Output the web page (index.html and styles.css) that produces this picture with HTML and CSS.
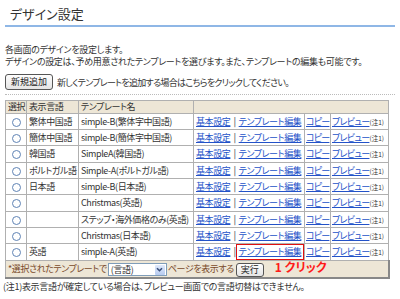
FILE: index.html
```html
<!DOCTYPE html>
<html>
<head>
    <title>デザイン設定</title>
    <meta charset="utf-8">
    <link rel="stylesheet" href="styles.css">
</head>
<body>
    <h1 class="title">デザイン設定</h1>
    <p class="desc">各画面のデザインを設定します。<br>デザインの設定は、予め用意されたテンプレートを選びます。また、テンプレートの編集も可能です。</p>
    <div class="add-row">
        <button class="btn">新規追加</button>
        <span class="add-text">新しくテンプレートを追加する場合はこちらをクリックしてください。</span>
    </div>
    <table class="design">
        <colgroup>
            <col class="c-sel"><col class="c-lang"><col class="c-name"><col class="c-edit"><col class="c-copy"><col class="c-prev">
        </colgroup>
        <thead>
            <tr><th>選択</th><th>表示言語</th><th>テンプレート名</th><th colspan="3"></th></tr>
        </thead>
        <tbody id="rows">
            <!-- テンプレート一覧 -->
        </tbody>
        <tfoot>
            <tr>
                <td colspan="6" class="bar">
                    <span class="brown">*選択されたテンプレートで</span><span class="select"><span class="select-text">(言語)</span><span class="arrow"><svg width="9" height="9" viewBox="0 0 9 9"><path d="M2 3.2 L4.5 5.7 L7 3.2" fill="none" stroke="#3a4f7a" stroke-width="1.6"/></svg></span></span><span class="brown">ページを表示する</span><button class="btn run">実行</button><span class="click">1 クリック</span>
                </td>
            </tr>
        </tfoot>
    </table>
    <p class="note">(注1)表示言語が確定している場合は、プレビュー画面での言語切替はできません。</p>
    <script type="text/javascript">
        const templates = [
            ['繁体中国語', 'simple-B(繁体字中国語)'],
            ['簡体中国語', 'simple-B(簡体字中国語)'],
            ['韓国語', 'SimpleA(韓国語)'],
            ['ポルトガル語', 'Simple-A(ポルトガル語)'],
            ['日本語', 'simple-B(日本語)'],
            ['', 'Christmas(英語)'],
            ['', 'ステップ・海外価格のみ(英語)'],
            ['', 'Christmas(日本語)'],
            ['英語', 'simple-A(英語)']
        ];
        const rows = document.getElementById('rows');
        templates.forEach(function(t, i) {
            const tr = document.createElement('tr');
            const last = i === templates.length - 1;
            tr.innerHTML =
                '<td class="sel"><span class="radio"></span></td>' +
                '<td>' + t[0] + '</td>' +
                '<td>' + t[1] + '</td>' +
                '<td><a href="#">基本設定</a><span class="sep">|</span>' +
                (last ? '<span class="hl"><a href="#">テンプレート編集</a></span>' : '<a href="#">テンプレート編集</a>') + '</td>' +
                '<td class="copy"><a href="#">コピー</a></td>' +
                '<td class="prev"><a href="#">プレビュー</a><span class="small">(注1)</span></td>';
            rows.appendChild(tr);
        });
    </script>
</body>
</html>
```

FILE: styles.css
```css
body {
    margin: 0;
    padding: 0 5px;
    font-family: "Noto Sans CJK JP", sans-serif;
    font-size: 9px;
    letter-spacing: -0.3px;
    color: #333;
    font-feature-settings: "palt" 1;
    background: #fff;
}
.title {
    margin: 0;
    padding: 5px 0 3px 5px;
    font-size: 13px;
    font-weight: normal;
    line-height: 17px;
    letter-spacing: 0;
    border-bottom: 2px solid #8fb7e6;
}
.desc {
    margin: 17px 0 0 0;
    line-height: 12px;
}
.add-row {
    display: flex;
    align-items: center;
    gap: 4px;
    margin-top: 6px;
    padding-bottom: 4px;
    border-bottom: 1px dotted #bbb;
}
.add-text {
    letter-spacing: -0.7px;
}
.btn {
    font-family: inherit;
    font-size: 9px;
    letter-spacing: 0;
    color: #222;
    height: 16px;
    padding: 0 5px;
    line-height: 14px;
    border: 1px solid #555;
    border-radius: 3px;
    background: linear-gradient(#fdfdfd, #e4e4e4);
    font-feature-settings: "palt" 1;
}
.design {
    margin-top: 5px;
    width: 383px;
    table-layout: fixed;
    border-collapse: collapse;
    border: 1px solid #999;
    letter-spacing: -0.4px;
}
.c-sel { width: 21px; }
.c-lang { width: 52px; }
.c-name { width: 115px; }
.c-edit { width: 111px; }
.c-copy { width: 26px; }
.c-prev { width: 58px; }
.design th, .design td {
    border: 1px solid #b0b0b0;
    padding: 0 2px;
    line-height: 12px;
    text-align: left;
    white-space: nowrap;
    overflow: visible;
}
.design th {
    height: 12px;
    background: #ede6d6;
    font-weight: normal;
}
.design td {
    height: 15px;
}
.design tbody tr:nth-child(3n) td {
    height: 16px;
}
.design td.sel {
    text-align: center;
    padding: 0;
}
.design td.copy {
    padding: 0 1px;
    letter-spacing: -0.8px;
}
.design td.prev {
    padding: 0 1px;
    letter-spacing: -0.7px;
}
.radio {
    display: inline-block;
    width: 7px;
    height: 7px;
    border: 1px solid #5f83b5;
    border-radius: 50%;
    background: #fff;
    vertical-align: middle;
}
.design a {
    color: #2352c8;
    text-decoration: underline;
}
.sep {
    color: #777;
    font-weight: bold;
    margin: 0 3px;
}
.small {
    font-size: 6.5px;
    letter-spacing: 0;
}
.hl {
    border: 1px solid #e01010;
    padding: 0 2px 1px 2px;
    margin-left: -3px;
}
.design td.bar {
    background: #ede6d6;
    height: 15px;
    padding: 0 2px;
    border-right: 2px solid #888;
    border-bottom: 2px solid #888;
}
.brown {
    color: #7a4a2a;
}
.select {
    display: inline-flex;
    align-items: center;
    justify-content: space-between;
    width: 55px;
    height: 11px;
    margin: 0 1px;
    padding: 0 0 0 2px;
    border: 1px solid #7f9db9;
    background: #fff;
    vertical-align: middle;
}
.arrow {
    display: inline-flex;
    align-items: center;
    justify-content: center;
    width: 10px;
    height: 10px;
    margin-right: 1px;
    background: linear-gradient(#dfe9fb, #b7cbf0);
    border-radius: 1px;
}
.run {
    height: 14px;
    line-height: 12px;
    padding: 0 4px;
    margin-left: 2px;
    vertical-align: middle;
}
.click {
    margin-left: 11px;
    color: #ff1a1a;
    font-weight: bold;
    font-size: 12px;
    letter-spacing: 0;
}
.note {
    margin: 2px 0 0 -2px;
    line-height: 12px;
}
```
